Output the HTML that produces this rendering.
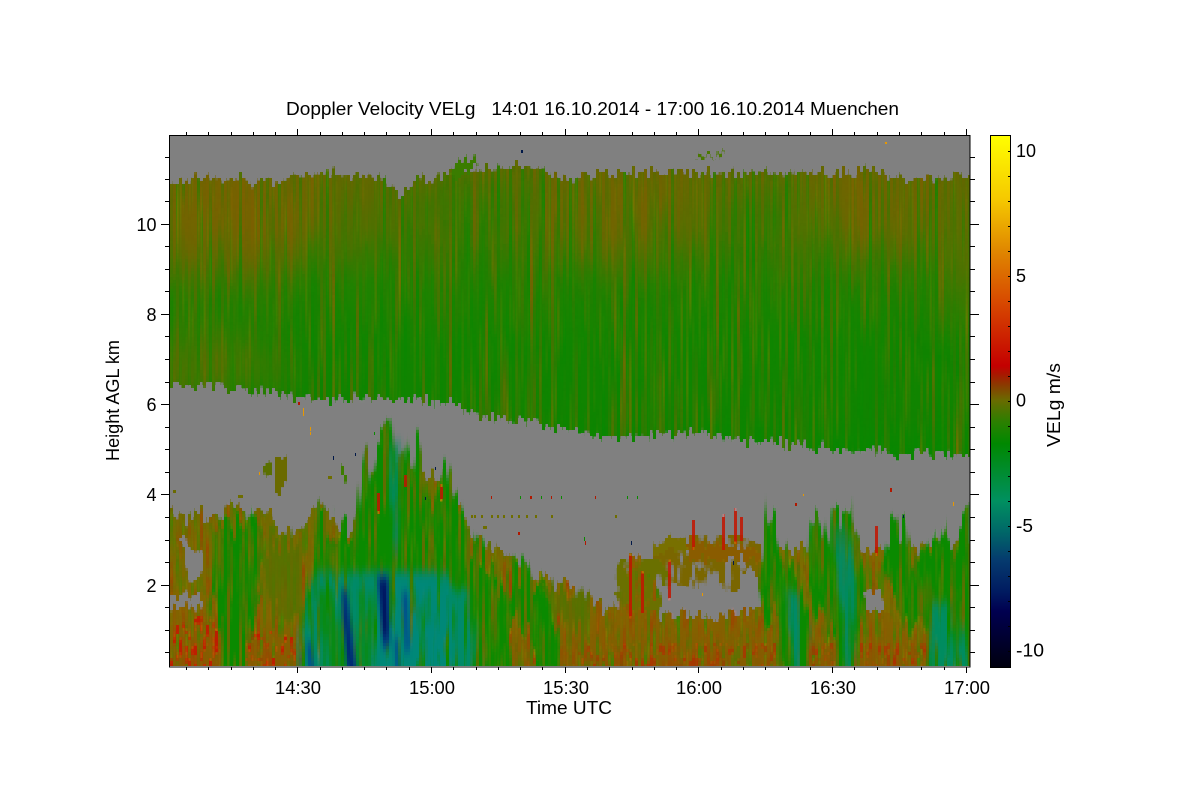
<!DOCTYPE html>
<html><head><meta charset="utf-8"><title>Doppler Velocity</title>
<style>html,body{margin:0;padding:0;background:#fff}svg{display:block}text{font-family:"Liberation Sans",sans-serif;font-size:18px;fill:#000}</style>
</head><body>
<svg width="1200" height="800" viewBox="0 0 1200 800" xmlns="http://www.w3.org/2000/svg">
<defs>
<linearGradient id="cb" gradientUnits="userSpaceOnUse" x1="0" y1="135" x2="0" y2="667">
<stop offset="0" stop-color="#ffff00"/><stop offset=".122" stop-color="#f5c800"/><stop offset=".216" stop-color="#e08800"/><stop offset=".31" stop-color="#d84c00"/><stop offset=".434" stop-color="#c40000"/><stop offset=".45" stop-color="#a81800"/><stop offset=".47" stop-color="#8a3a00"/><stop offset=".498" stop-color="#6a6a00"/><stop offset=".54" stop-color="#2a8000"/><stop offset=".58" stop-color="#008800"/><stop offset=".688" stop-color="#009060"/><stop offset=".745" stop-color="#006868"/><stop offset=".8" stop-color="#053a6e"/><stop offset=".86" stop-color="#001a60"/><stop offset=".895" stop-color="#000050"/><stop offset="1" stop-color="#00000f"/>
</linearGradient>
<linearGradient id="up" gradientUnits="userSpaceOnUse" x1="0" y1="170" x2="0" y2="460">
<stop offset="0" stop-color="#666600"/><stop offset=".2" stop-color="#507000"/><stop offset=".4" stop-color="#208100"/><stop offset=".6" stop-color="#108500"/><stop offset=".85" stop-color="#108300"/><stop offset="1" stop-color="#068800"/>
</linearGradient>
<linearGradient id="lo" gradientUnits="userSpaceOnUse" x1="0" y1="510" x2="0" y2="666">
<stop offset="0" stop-color="#6f6c00"/><stop offset=".6" stop-color="#826500"/><stop offset="1" stop-color="#865a00"/>
</linearGradient>
<clipPath id="plot"><rect x="170" y="136" width="800" height="530"/></clipPath>
<clipPath id="uc"><polygon points="170,183 180,179 225,178 240,178 250,182 270,180 300,176 327,172 350,177 372,178 393,183 400,200 410,182 423,178 457,173 480,170 517,166 540,168 560,180 573,176 600,172 700,172 800,173 870,170 900,178 930,178 970,172 970,452 900,455 850,450 800,445 740,440 700,433 650,435 620,440 600,437 540,425 483,417 450,403 383,398 330,400 250,392 170,382"/></clipPath>

<filter id="px" filterUnits="userSpaceOnUse" x="170" y="136" width="800" height="530" color-interpolation-filters="sRGB">
<feFlood x="171" y="137" width="1" height="1" flood-color="#000"/>
<feComposite x="170" y="136" width="3" height="3" operator="over"/>
<feTile x="170" y="136" width="800" height="530" result="a"/>
<feComposite in="SourceGraphic" in2="a" operator="in"/>
<feMorphology operator="dilate" radius="1"/>
</filter>

<filter id="fU" filterUnits="userSpaceOnUse" x="170" y="136" width="800" height="530" color-interpolation-filters="sRGB">
<feTurbulence type="fractalNoise" baseFrequency="0.28 0.03" numOctaves="2" seed="4" result="t"/>
<feColorMatrix in="t" type="matrix" values="2.2 0 0 0 -.6 0 0 0 0 .5 0 0 0 0 0 0 0 0 0 1" result="d"/>
<feDisplacementMap in="SourceGraphic" in2="d" scale="13" xChannelSelector="G" yChannelSelector="R" result="s"/>
<feTurbulence type="fractalNoise" baseFrequency="0.42 0.006" numOctaves="3" seed="9" result="t2"/>
<feColorMatrix in="t2" type="matrix" values="0 0 0 0 .5 0 0 0 0 .37 0 0 0 0 0 2.2 0 0 0 -1.05" result="b"/>
<feComposite in="b" in2="s" operator="in" result="b2"/>
<feColorMatrix in="t2" type="matrix" values="0 0 0 0 .03 0 0 0 0 .53 0 0 0 0 0 0 2.2 0 0 -1" result="g"/>
<feComposite in="g" in2="s" operator="in" result="g2"/>
<feMerge><feMergeNode in="s"/><feMergeNode in="b2"/><feMergeNode in="g2"/></feMerge>
</filter>

<filter id="fL" filterUnits="userSpaceOnUse" x="170" y="136" width="800" height="580" color-interpolation-filters="sRGB">
<feTurbulence type="fractalNoise" baseFrequency="0.24 0.02" numOctaves="2" seed="14" result="t"/>
<feColorMatrix in="t" type="matrix" values="2.2 0 0 0 -.6 0 0 0 0 .5 0 0 0 0 0 0 0 0 0 1" result="d"/>
<feDisplacementMap in="SourceGraphic" in2="d" scale="20" xChannelSelector="G" yChannelSelector="R" result="s"/>
<feTurbulence type="fractalNoise" baseFrequency="0.3 0.025" numOctaves="3" seed="21" result="t2"/>
<feColorMatrix in="t2" type="matrix" values="0 0 0 0 .6 0 0 0 0 .27 0 0 0 0 0 3 0 0 0 -1.45" result="b"/>
<feComposite in="b" in2="s" operator="in" result="b2"/>
<feColorMatrix in="t2" type="matrix" values="0 0 0 0 .25 0 0 0 0 .5 0 0 0 0 0 0 3 0 0 -1.45" result="g"/>
<feComposite in="g" in2="s" operator="in" result="g2"/>
<feMerge><feMergeNode in="s"/><feMergeNode in="b2"/><feMergeNode in="g2"/></feMerge>
</filter>

<filter id="fP" filterUnits="userSpaceOnUse" x="170" y="136" width="800" height="580" color-interpolation-filters="sRGB">
<feGaussianBlur in="SourceGraphic" stdDeviation="1 2" result="bl"/>
<feTurbulence type="fractalNoise" baseFrequency="0.22 0.012" numOctaves="2" seed="31" result="t"/>
<feColorMatrix in="t" type="matrix" values="3 0 0 0 -1 0 0 0 0 .5 0 0 0 0 0 0 0 0 0 1" result="d"/>
<feDisplacementMap in="bl" in2="d" scale="34" xChannelSelector="G" yChannelSelector="R" result="s"/>
<feTurbulence type="fractalNoise" baseFrequency="0.3 0.012" numOctaves="3" seed="37" result="t2"/>
<feColorMatrix in="t2" type="matrix" values="0 0 0 0 .38 0 0 0 0 .42 0 0 0 0 0 3.5 0 0 0 -1.6" result="b"/>
<feComposite in="b" in2="s" operator="in" result="b2"/>
<feMerge><feMergeNode in="s"/><feMergeNode in="b2"/></feMerge>
</filter>

<filter id="fT" filterUnits="userSpaceOnUse" x="170" y="136" width="800" height="580" color-interpolation-filters="sRGB">
<feGaussianBlur in="SourceGraphic" stdDeviation="3 5" result="bl"/>
<feTurbulence type="fractalNoise" baseFrequency="0.1 0.01" numOctaves="2" seed="41" result="t"/>
<feColorMatrix in="t" type="matrix" values="2.2 0 0 0 -.6 0 0 0 0 .5 0 0 0 0 0 0 0 0 0 1" result="d"/>
<feDisplacementMap in="bl" in2="d" scale="14" xChannelSelector="R" yChannelSelector="G" result="s"/>
<feTurbulence type="fractalNoise" baseFrequency="0.22 0.011" numOctaves="3" seed="43" result="t2"/>
<feColorMatrix in="t2" type="matrix" values="0 0 0 0 0 0 0 0 0 0 0 0 0 0 0 4.5 0 0 0 -1.3" result="m"/>
<feComposite in="s" in2="m" operator="in"/>
</filter>

<filter id="fB" filterUnits="userSpaceOnUse" x="170" y="136" width="800" height="580" color-interpolation-filters="sRGB">
<feGaussianBlur stdDeviation="1.5 5"/>
</filter>

<filter id="fD" filterUnits="userSpaceOnUse" x="170" y="136" width="800" height="530" color-interpolation-filters="sRGB">
<feTurbulence type="fractalNoise" baseFrequency="0.25 0.03" numOctaves="2" seed="51" result="t"/>
<feColorMatrix in="t" type="matrix" values="2.2 0 0 0 -.6 0 0 0 0 .5 0 0 0 0 0 0 0 0 0 1" result="d"/>
<feDisplacementMap in="SourceGraphic" in2="d" scale="12" xChannelSelector="G" yChannelSelector="R"/>
</filter>

<filter id="fS" filterUnits="userSpaceOnUse" x="170" y="136" width="800" height="530" color-interpolation-filters="sRGB">
<feTurbulence type="fractalNoise" baseFrequency="0.12 0.035" numOctaves="3" seed="61" result="t"/>
<feColorMatrix in="t" type="matrix" values="0 0 0 0 0 0 0 0 0 0 0 0 0 0 0 9 0 0 0 -3.4" result="m"/>
<feComposite in="SourceGraphic" in2="m" operator="in"/>
</filter>

<filter id="fR" filterUnits="userSpaceOnUse" x="170" y="136" width="800" height="530" color-interpolation-filters="sRGB">
<feTurbulence type="fractalNoise" baseFrequency="0.3 0.07" numOctaves="2" seed="71" result="t"/>
<feColorMatrix in="t" type="matrix" values="0 0 0 0 .76 0 0 0 0 .1 0 0 0 0 0 8 0 0 0 -4.4" result="m"/>
<feComposite in="m" in2="SourceGraphic" operator="in"/>
</filter>
<filter id="e1" filterUnits="userSpaceOnUse" x="100" y="100" width="950" height="420"><feGaussianBlur stdDeviation="22"/></filter>
</defs>

<g clip-path="url(#plot)">
<g filter="url(#px)">
<rect x="170" y="136" width="800" height="530" fill="#808080"/>
<rect x="170" y="640" width="800" height="30" fill="#865a00"/>

<!-- upper cloud layer -->
<g filter="url(#fU)">
<g clip-path="url(#uc)">
<rect x="170" y="160" width="800" height="300" fill="url(#up)"/>
<g filter="url(#e1)">
<ellipse cx="230" cy="225" rx="85" ry="60" fill="#8a5c00" opacity=".6"/>
<ellipse cx="190" cy="365" rx="90" ry="32" fill="#6f6a00" opacity=".7"/>
<ellipse cx="625" cy="215" rx="55" ry="50" fill="#8a5c00" opacity=".5"/>
<ellipse cx="870" cy="205" rx="50" ry="40" fill="#8a5c00" opacity=".5"/>
<ellipse cx="470" cy="205" rx="55" ry="35" fill="#1a8000" opacity=".6"/>
<ellipse cx="760" cy="215" rx="45" ry="35" fill="#1f8000" opacity=".4"/>
<ellipse cx="970" cy="260" rx="35" ry="70" fill="#6f6a00" opacity=".5"/>
</g>
</g>
</g>
<g filter="url(#fD)">
<polygon points="450,170 462,160 476,158 478,165 468,172 455,175" fill="#3a7c00"/>
<polygon points="694,158 712,156 726,154 726,158 700,161" fill="#4a7800"/>
<polygon points="268,458 272,458 272,476 266,480 263,470" fill="#5a7000"/>
<polygon points="275,460 288,456 288,478 282,490 279,496 276,486 276,470" fill="#6a6a00"/>
<polygon points="342,470 346,468 348,476 342,478" fill="#3d7c00"/>
<polygon points="176,494 172,494 172,498 176,498" fill="#6a6a00"/>
</g>

<!-- lower base -->
<g filter="url(#fL)">
<polygon fill="url(#lo)" points="170,700 170,515 185,520 200,513 215,516 232,505 250,516 268,510 275,522 295,530 305,515 325,510 335,526 352,530 362,500 375,470 410,470 440,480 462,510 470,540 495,548 515,560 540,575 555,588 565,584 578,590 590,596 605,607 620,612 970,612 970,700"/>
<polygon fill="#7c6c00" points="740,612 740,585 760,560 800,545 830,555 870,550 970,540 970,612"/>
<polygon fill="#8a5e00" points="618,612 622,580 628,560 640,558 650,570 658,590 660,612"/>
</g>
<g filter="url(#fS)">
<polygon fill="#7a6600" points="655,545 690,536 740,535 762,545 762,565 758,590 740,592 700,590 680,586 660,575 652,560"/>
<polygon fill="#6a7000" points="610,580 620,560 660,560 672,580 660,610 620,610"/>
</g>
<g filter="url(#fD)">
<polygon fill="#787000" points="652,541 672,538 690,540 690,552 660,553 652,548"/>
<polygon fill="#8a5c00" points="686,540 760,552 762,560 690,560"/>
</g>
<!-- holes -->
<g filter="url(#fD)" fill="#808080">
<polygon points="180,537 186,536 192,550 202,556 202,570 196,580 188,578 186,560"/>
<polygon points="170,595 182,594 190,598 203,594 203,602 190,608 170,606"/>
<polygon points="740,574 757,570 762,612 740,612"/>
<polygon points="662,590 740,590 752,612 660,612"/>
</g>
<!-- red speckle zone -->
<g filter="url(#fR)" fill="#000">
<polygon fill-opacity=".9" points="170,625 216,612 222,666 170,666"/>
<polygon fill-opacity=".9" points="245,625 302,640 304,666 245,666"/>
<polygon fill-opacity=".5" points="530,645 970,642 970,666 530,666"/>
</g>
<!-- green plumes -->
<g filter="url(#fP)" fill="#0a8a00">
<polygon points="218,540 228,525 240,520 260,525 262,560 255,590 262,610 250,628 238,700 218,700 222,620 210,590 212,570"/>
<polygon points="300,700 302,600 315,560 318,510 335,530 356,525 362,470 366,445 372,470 376,445 382,435 390,418 394,460 398,440 405,432 410,470 418,432 423,470 430,520 442,462 452,490 462,510 470,540 490,560 505,600 515,700"/>
<polygon points="515,570 545,580 560,650 565,700 545,700 530,640 500,610"/>
<polygon points="760,560 768,512 775,520 785,555 800,575 810,620 805,700 785,700 778,620 765,612 760,585"/>
<polygon points="810,522 820,520 825,530 835,560 845,610 830,640 815,610 808,560"/>
<polygon points="832,515 848,512 858,525 865,560 866,600 855,660 848,700 838,700 835,620 825,590 830,540"/>
<polygon points="885,530 895,530 905,530 915,570 930,612 930,640 905,615 890,590 882,560"/>
<polygon points="920,560 932,535 945,530 955,545 960,530 970,512 970,700 925,700 930,620 918,590"/>
</g>
<g filter="url(#fP)" fill="#4e7400" opacity=".75">
<polygon points="262,540 300,540 302,610 285,615 268,610"/>
<polygon points="540,590 590,600 585,640 560,625"/>
</g>
<!-- gray hole in right plumes -->
<g filter="url(#fD)" fill="#808080">
<polygon points="864,590 880,588 885,612 866,612"/>
</g>
<!-- teal -->
<g filter="url(#fT)">
<polygon fill="#008a68" points="318,572 440,572 468,595 476,640 474,700 308,700 304,640 310,590"/>
<polygon fill="#008878" points="376,574 436,574 456,620 458,700 376,700"/>
<polygon fill="#008a68" points="788,590 798,592 802,630 798,700 790,700 786,625"/>
<polygon fill="#008a68" points="840,525 843,525 850,580 851,630 849,700 842,700 842,620 838,560"/>
<polygon fill="#008c60" points="938,600 950,606 966,660 960,700 934,700 934,625"/>
<polygon fill="#008a68" points="391,440 394,440 400,500 397,560 393,560"/>
</g>
<g filter="url(#fT)" fill="#0a8a00" opacity=".8">
<polygon points="316,592 332,588 342,640 350,700 326,700"/>
<polygon points="358,592 370,588 370,640 366,700 361,700"/>
<polygon points="423,592 430,592 430,622 424,622"/>
</g>
<!-- dark streaks -->
<g filter="url(#fB)">
<polygon fill="#00387a" points="341,590 347,590 358,680 348,680"/>
<polygon fill="#00206c" points="342,610 345,610 354,680 350,680"/>
<polygon fill="#003880" points="377,576 389,576 390,645 383,650"/>
<polygon fill="#00145e" points="380,580 386,580 388,632 383,638"/>
<polygon fill="#00508a" points="402,592 408,592 410,650 405,654"/>
<polygon fill="#00508a" points="394,638 398,638 400,680 396,680"/>
<polygon fill="#00508a" points="306,642 311,642 316,680 309,680"/>
</g>
<!-- red spikes -->
<g filter="url(#fD)" fill="#c41400" opacity=".85">
<rect x="629" y="558" width="3" height="54"/><rect x="640" y="570" width="3" height="40"/><rect x="669" y="562" width="2" height="35"/>
<rect x="692" y="516" width="3" height="34"/><rect x="697" y="522" width="2" height="26"/><rect x="722" y="516" width="3" height="34"/><rect x="727" y="520" width="2" height="26"/><rect x="735" y="510" width="3" height="36"/><rect x="740" y="514" width="3" height="30"/><rect x="706" y="525" width="2" height="22"/>
<rect x="377" y="492" width="2" height="22"/><rect x="397" y="498" width="2" height="20"/><rect x="405" y="470" width="2" height="14"/><rect x="412" y="445" width="2" height="14"/><rect x="440" y="486" width="2" height="16"/>
<rect x="874" y="522" width="3" height="36"/><rect x="214" y="632" width="3" height="14"/>
</g>
</g>

<!-- isolated specks -->
<g shape-rendering="crispEdges">
<g fill="#6e6e00"><rect x="471" y="515" width="2" height="3"/><rect x="474" y="515" width="2" height="3"/><rect x="481" y="515" width="2" height="3"/><rect x="491" y="515" width="2" height="3"/><rect x="497" y="515" width="2" height="3"/><rect x="503" y="515" width="2" height="3"/><rect x="511" y="515" width="2" height="3"/><rect x="518" y="515" width="2" height="3"/><rect x="526" y="515" width="2" height="3"/><rect x="535" y="515" width="2" height="3"/><rect x="551" y="515" width="2" height="3"/><rect x="483" y="526" width="4" height="3"/><rect x="615" y="515" width="2" height="3"/><rect x="238" y="495" width="5" height="3"/><rect x="328" y="476" width="4" height="3"/></g>
<g fill="#b01800"><rect x="491" y="496" width="1" height="3"/><rect x="530" y="496" width="2" height="3"/><rect x="551" y="496" width="1" height="3"/><rect x="595" y="496" width="1" height="3"/><rect x="518" y="532" width="2" height="3"/><rect x="585" y="541" width="1" height="4"/><rect x="890" y="488" width="2" height="4"/><rect x="795" y="503" width="2" height="3"/><rect x="298" y="402" width="2" height="3"/></g>
<g fill="#0a8a00"><rect x="520" y="496" width="1" height="3"/><rect x="541" y="496" width="1" height="3"/><rect x="561" y="496" width="1" height="3"/><rect x="627" y="496" width="1" height="3"/><rect x="637" y="496" width="1" height="3"/><rect x="584" y="537" width="1" height="4"/><rect x="374" y="432" width="1" height="3"/></g>
<g fill="#e89800"><rect x="310" y="427" width="1" height="4"/><rect x="310" y="432" width="1" height="3"/><rect x="702" y="593" width="1" height="3"/><rect x="303" y="408" width="1" height="8"/><rect x="953" y="502" width="1" height="4"/><rect x="803" y="494" width="1" height="2"/><rect x="885" y="142" width="2" height="2"/><rect x="259" y="472" width="1" height="3"/></g>
<g fill="#001848"><rect x="521" y="150" width="2" height="3"/><rect x="733" y="561" width="1" height="4"/><rect x="903" y="515" width="1" height="3"/><rect x="333" y="456" width="1" height="4"/><rect x="355" y="453" width="1" height="3"/><rect x="425" y="497" width="1" height="3"/><rect x="435" y="467" width="1" height="3"/><rect x="631" y="541" width="1" height="4"/></g>
</g>
</g>

<!-- plot frame -->
<g fill="none" stroke="#000" stroke-width="1" shape-rendering="crispEdges">
<rect x="169.5" y="135.5" width="800.5" height="531.5"/>
<path d="M186.5 132V135M186.5 667V670M208.5 132V135M208.5 667V670M231.5 132V135M231.5 667V670M253.5 132V135M253.5 667V670M275.5 132V135M275.5 667V670M320.5 132V135M320.5 667V670M342.5 132V135M342.5 667V670M364.5 132V135M364.5 667V670M386.5 132V135M386.5 667V670M409.5 132V135M409.5 667V670M453.5 132V135M453.5 667V670M476.5 132V135M476.5 667V670M498.5 132V135M498.5 667V670M520.5 132V135M520.5 667V670M542.5 132V135M542.5 667V670M587.5 132V135M587.5 667V670M609.5 132V135M609.5 667V670M632.5 132V135M632.5 667V670M654.5 132V135M654.5 667V670M676.5 132V135M676.5 667V670M721.5 132V135M721.5 667V670M743.5 132V135M743.5 667V670M765.5 132V135M765.5 667V670M788.5 132V135M788.5 667V670M810.5 132V135M810.5 667V670M854.5 132V135M854.5 667V670M877.5 132V135M877.5 667V670M899.5 132V135M899.5 667V670M921.5 132V135M921.5 667V670M944.5 132V135M944.5 667V670"/>
<path d="M297.5 129V135M297.5 667V673M431.5 129V135M431.5 667V673M565.5 129V135M565.5 667V673M698.5 129V135M698.5 667V673M832.5 129V135M832.5 667V673M966.5 129V135M966.5 667V673"/>
<path d="M165 157.5H169M970 157.5H975M165 179.5H169M970 179.5H975M165 201.5H169M970 201.5H975M165 246.5H169M970 246.5H975M165 269.5H169M970 269.5H975M165 291.5H169M970 291.5H975M165 336.5H169M970 336.5H975M165 359.5H169M970 359.5H975M165 382.5H169M970 382.5H975M165 427.5H169M970 427.5H975M165 449.5H169M970 449.5H975M165 472.5H169M970 472.5H975M165 517.5H169M970 517.5H975M165 540.5H169M970 540.5H975M165 562.5H169M970 562.5H975M165 607.5H169M970 607.5H975M165 630.5H169M970 630.5H975M165 652.5H169M970 652.5H975"/>
<path d="M161 224.5H169M970 224.5H979M161 314.5H169M970 314.5H979M161 404.5H169M970 404.5H979M161 494.5H169M970 494.5H979M161 585.5H169M970 585.5H979"/>
</g>

<!-- colorbar -->
<rect x="990" y="135" width="20.5" height="532.5" fill="url(#cb)"/>
<rect x="990.5" y="135.5" width="20" height="532" fill="none" stroke="#000" stroke-width="1" shape-rendering="crispEdges"/>
<line x1="1009" y1="151" x2="1009" y2="652" stroke="#000" stroke-width="2" stroke-dasharray="1 24" shape-rendering="crispEdges"/>

<!-- labels -->
<text x="286" y="115" textLength="613" lengthAdjust="spacingAndGlyphs" xml:space="preserve" style="white-space:pre">Doppler Velocity VELg   14:01 16.10.2014 - 17:00 16.10.2014 Muenchen</text>
<g text-anchor="end">
<text x="156.5" y="231">10</text><text x="156.5" y="321">8</text><text x="156.5" y="411">6</text><text x="156.5" y="501">4</text><text x="156.5" y="592">2</text>
</g>
<text x="275" y="694" textLength="46" lengthAdjust="spacingAndGlyphs">14:30</text>
<text x="409" y="694" textLength="46" lengthAdjust="spacingAndGlyphs">15:00</text>
<text x="543" y="694" textLength="46" lengthAdjust="spacingAndGlyphs">15:30</text>
<text x="676" y="694" textLength="46" lengthAdjust="spacingAndGlyphs">16:00</text>
<text x="810" y="694" textLength="46" lengthAdjust="spacingAndGlyphs">16:30</text>
<text x="944" y="694" textLength="46" lengthAdjust="spacingAndGlyphs">17:00</text>
<text x="526" y="714" textLength="86" lengthAdjust="spacingAndGlyphs">Time UTC</text>
<text transform="translate(119,461) rotate(-90)" textLength="121" lengthAdjust="spacingAndGlyphs">Height AGL km</text>
<text transform="translate(1060,447) rotate(-90)" textLength="84" lengthAdjust="spacingAndGlyphs">VELg m/s</text>
<text x="1016" y="157">10</text><text x="1016" y="282">5</text><text x="1016" y="406.5">0</text>
<text x="1016" y="532" textLength="17" lengthAdjust="spacingAndGlyphs">-5</text>
<text x="1016" y="656.5" textLength="28" lengthAdjust="spacingAndGlyphs">-10</text>
</svg>
</body></html>
